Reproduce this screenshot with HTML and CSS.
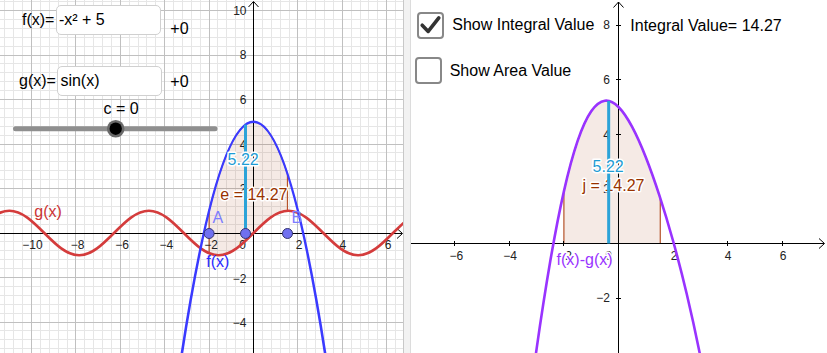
FILE: index.html
```html
<!DOCTYPE html>
<html>
<head>
<meta charset="utf-8">
<title>Integral between f and g</title>
<link rel="stylesheet" href="styles.css">
</head>
<body>
<div class="applet">
  <div class="view view-left">
    <svg class="canvas" width="403" height="353" viewBox="0 0 403 353">
      <g transform="translate(253.5 233) scale(22.2 -22.25)">
        <path class="grid-minor" d="M-11.2 -6V11M-10.8 -6V11M-10.4 -6V11M-9.6 -6V11M-9.2 -6V11M-8.8 -6V11M-8.4 -6V11M-7.6 -6V11M-7.2 -6V11M-6.8 -6V11M-6.4 -6V11M-5.6 -6V11M-5.2 -6V11M-4.8 -6V11M-4.4 -6V11M-3.6 -6V11M-3.2 -6V11M-2.8 -6V11M-2.4 -6V11M-1.6 -6V11M-1.2 -6V11M-0.8 -6V11M-0.4 -6V11M0.4 -6V11M0.8 -6V11M1.2 -6V11M1.6 -6V11M2.4 -6V11M2.8 -6V11M3.2 -6V11M3.6 -6V11M4.4 -6V11M4.8 -6V11M5.2 -6V11M5.6 -6V11M6.4 -6V11M-12 -5.2H7M-12 -4.8H7M-12 -4.4H7M-12 -3.6H7M-12 -3.2H7M-12 -2.8H7M-12 -2.4H7M-12 -1.6H7M-12 -1.2H7M-12 -0.8H7M-12 -0.4H7M-12 0.4H7M-12 0.8H7M-12 1.2H7M-12 1.6H7M-12 2.4H7M-12 2.8H7M-12 3.2H7M-12 3.6H7M-12 4.4H7M-12 4.8H7M-12 5.2H7M-12 5.6H7M-12 6.4H7M-12 6.8H7M-12 7.2H7M-12 7.6H7M-12 8.4H7M-12 8.8H7M-12 9.2H7M-12 9.6H7M-12 10.4H7"/>
        <path class="grid-major" d="M-10 -6V11M-8 -6V11M-6 -6V11M-4 -6V11M-2 -6V11M2 -6V11M4 -6V11M6 -6V11M-12 -4H7M-12 -2H7M-12 2H7M-12 4H7M-12 6H7M-12 8H7M-12 10H7"/>
        <path class="region" d="M-2 1Q-0.235 8.06 1.53 2.6591L1.53 0.9992L1.25 0.949L1 0.8415L0.75 0.6816L0.5 0.4794L0.25 0.2474L0 0L-0.25 -0.2474L-0.5 -0.4794L-0.75 -0.6816L-1 -0.8415L-1.25 -0.949L-1.5 -0.9975L-1.75 -0.984L-2 -0.9093Z"/>
      </g>
      <path class="axis" d="M0 233.5H402M253.5 353V1.5"/>
      <path class="arrow" d="M397 228.5L402.5 233.5L397 238.5M248.5 7L253.5 1.5L258.5 7"/>
      <g class="tick tick-mid">
        <text x="32.5" y="249">−10</text>
        <text x="77.5" y="249">−8</text>
        <text x="122" y="249">−6</text>
        <text x="166.3" y="249">−4</text>
        <text x="211" y="249">−2</text>
        <text x="242.5" y="249">0</text>
        <text x="299" y="249">2</text>
        <text x="342.8" y="249">4</text>
        <text x="388" y="249">6</text>
      </g>
      <g class="tick tick-end">
        <text x="246.5" y="15">10</text>
        <text x="246.5" y="59">8</text>
        <text x="246.5" y="104">6</text>
        <text x="246.5" y="148.5">4</text>
        <text x="246.5" y="193">2</text>
        <text x="246.5" y="283">−2</text>
        <text x="246.5" y="327">−4</text>
      </g>
      <g transform="translate(253.5 233) scale(22.2 -22.25)">
        <path class="curve curve-g" d="M-12.5664 0c0.5123 0.5123 1.0023 1 1.5708 1c0.5685 0 1.0585 -0.4877 1.5708 -1c0.5123 -0.5123 1.0023 -1 1.5708 -1c0.5685 0 1.0585 0.4877 1.5708 1c0.5123 0.5123 1.0023 1 1.5708 1c0.5685 0 1.0585 -0.4877 1.5708 -1c0.5123 -0.5123 1.0023 -1 1.5708 -1c0.5685 0 1.0585 0.4877 1.5708 1c0.5123 0.5123 1.0023 1 1.5708 1c0.5685 0 1.0585 -0.4877 1.5708 -1c0.5123 -0.5123 1.0023 -1 1.5708 -1c0.5685 0 1.0585 0.4877 1.5708 1c0.5123 0.5123 1.0023 1 1.5708 1"/>
        <path class="curve curve-f" d="M-3.6 -7.96Q0 17.96 3.6 -7.96"/>
      </g>
      <text class="lbl lbl-g" x="34.3" y="216.5">g(x)</text>
      <text class="lbl lbl-f" x="206.3" y="266.5">f(x)</text>
      <text class="lbl lbl-pt" x="212.6" y="223.3">A</text>
      <text class="lbl lbl-pt" x="291.6" y="223.3">B</text>
      <text class="lbl lbl-area halo" x="220.3" y="200">e = 14.27</text>
      <g transform="translate(253.5 233) scale(22.2 -22.25)">
        <path class="segment" d="M-0.36 0V4.8704"/>
      </g>
      <text class="lbl lbl-len halo" x="227.6" y="165">5.22</text>
      <circle class="point" cx="209.1" cy="233.5" r="5"/>
      <circle class="point" cx="245.5" cy="233.5" r="5"/>
      <circle class="point" cx="287.5" cy="233.5" r="5"/>
      <text class="lbl" x="170.3" y="34.3">+0</text>
      <text class="lbl" x="170.3" y="86.7">+0</text>
      <text class="lbl" x="103.6" y="114.3">c = 0</text>
      <line class="slider-track" x1="15.5" y1="128.7" x2="215" y2="128.7"/>
      <circle class="slider-ring" cx="115.7" cy="128.7" r="8.8"/>
      <circle class="slider-knob" cx="115.7" cy="128.7" r="6.2"/>
    </svg>
    <div class="field field-f">
      <span class="field-label">f(x)=</span>
      <div class="field-box">-x² + 5</div>
    </div>
    <div class="field field-g">
      <span class="field-label">g(x)=</span>
      <div class="field-box">sin(x)</div>
    </div>
  </div>
  <div class="divider"></div>
  <div class="view view-right">
    <svg class="canvas" width="416" height="353" viewBox="0 0 416 353">
      <g transform="translate(207.5 243.5) scale(27.3 -27.3)">
        <path class="region" d="M-2 0L-2 1.9093C-1.8333 2.6453 -1.6667 3.2593 -1.5 3.7475C-1.3333 4.2357 -1.1667 4.5982 -1 4.8415C-0.8333 5.0848 -0.6667 5.209 -0.5 5.2294C-0.3333 5.2498 -0.1667 5.1667 0 5C0.1667 4.8333 0.3333 4.5835 0.5 4.2706C0.6667 3.9577 0.8333 3.5819 1 3.1585C1.1667 2.7351 1.3333 2.2643 1.5 1.7525L1.53 1.66L1.53 0Z"/>
      </g>
      <path class="axis" d="M0 243.5H413M207.5 353V2M43.7 241V246M98.3 241V246M152.9 241V246M262.1 241V246M316.7 241V246M371.3 241V246M205 25.1H210M205 79.7H210M205 134.3H210M205 188.9H210M205 298.1H210"/>
      <path class="arrow" d="M408 238.5L413.5 243.5L408 248.5M202.5 7.5L207.5 2L212.5 7.5"/>
      <g class="tick tick-mid">
        <text x="45.3" y="259.5">−6</text>
        <text x="99" y="259.5">−4</text>
        <text x="154" y="259.5">−2</text>
        <text x="197.5" y="259.5">0</text>
        <text x="263" y="259.5">2</text>
        <text x="317" y="259.5">4</text>
        <text x="372" y="259.5">6</text>
      </g>
      <g class="tick tick-end">
        <text x="199" y="29.4">8</text>
        <text x="199" y="84">6</text>
        <text x="199" y="138.6">4</text>
        <text x="199" y="193.2">2</text>
        <text x="199" y="302.4">−2</text>
      </g>
      <g transform="translate(207.5 243.5) scale(27.3 -27.3)">
        <path class="curve curve-h" d="M-3.25 -5.6707C-3.1667 -5.0462 -3.0833 -4.4414 -3 -3.8589C-2.8333 -2.6939 -2.6667 -1.6184 -2.5 -0.6515C-2.3333 0.3154 -2.1667 1.1733 -2 1.9093C-1.8333 2.6453 -1.6667 3.2593 -1.5 3.7475C-1.3333 4.2357 -1.1667 4.5982 -1 4.8415C-0.8333 5.0848 -0.6667 5.209 -0.5 5.2294C-0.3333 5.2498 -0.1667 5.1667 0 5C0.1667 4.8333 0.3333 4.5835 0.5 4.2706C0.6667 3.9577 0.8333 3.5819 1 3.1585C1.1667 2.7351 1.3333 2.2643 1.5 1.7525C1.6667 1.2407 1.8333 0.688 2 0.0907C2.1667 -0.5066 2.3333 -1.1487 2.5 -1.8485C2.6667 -2.5483 2.8333 -3.3061 3 -4.1411C3.0833 -4.5586 3.1667 -4.9955 3.25 -5.4543"/>
      </g>
      <text class="lbl lbl-h halo" x="145.6" y="265">f(x)-g(x)</text>
      <text class="lbl lbl-area halo" x="171.6" y="191">j = 14.27</text>
      <g transform="translate(207.5 243.5) scale(27.3 -27.3)">
        <path class="segment" d="M-0.36 0V5.2227"/>
      </g>
      <text class="lbl lbl-len halo" x="181.6" y="171.7">5.22</text>
      <text class="lbl" x="219.3" y="31">Integral Value= 14.27</text>
    </svg>
    <label class="check check-1">
      <span class="check-box">
        <svg class="check-mark" width="23" height="23" viewBox="0 0 23 23"><path d="M3.2 11.2L9.2 17.4L19.8 3.8"/></svg>
      </span>
      <span class="check-text">Show Integral Value</span>
    </label>
    <label class="check check-2">
      <span class="check-box"></span>
      <span class="check-text">Show Area Value</span>
    </label>
  </div>
</div>
</body>
</html>
```

FILE: styles.css
```css
html, body {
  margin: 0;
  padding: 0;
  background: #ffffff;
}

body {
  font-family: "Liberation Sans", Arial, sans-serif;
  color: #000;
}

.applet {
  display: flex;
  width: 827px;
  height: 353px;
  overflow: hidden;
}

.view {
  position: relative;
  height: 353px;
  overflow: hidden;
  background: #ffffff;
}

.view-left {
  width: 403px;
  flex: none;
}

.view-right {
  flex: 1;
}

.divider {
  width: 8px;
  flex: none;
  box-sizing: border-box;
  background: #f2f2f2;
  border-left: 1px solid #c8c8c8;
  border-right: 1px solid #dcdcdc;
}

.canvas {
  display: block;
  font-family: "Liberation Sans", Arial, sans-serif;
}

/* grid and axes */
.grid-minor {
  fill: none;
  stroke: #e6e6e6;
  stroke-width: 1;
  vector-effect: non-scaling-stroke;
  shape-rendering: crispEdges;
}

.grid-major {
  fill: none;
  stroke: #c0c0c0;
  stroke-width: 1;
  vector-effect: non-scaling-stroke;
  shape-rendering: crispEdges;
}

.axis {
  fill: none;
  stroke: #000;
  stroke-width: 1;
  shape-rendering: crispEdges;
}

.arrow {
  fill: none;
  stroke: #000;
  stroke-width: 1;
}

.tick {
  font-size: 12px;
  fill: #222;
}

.tick-mid {
  text-anchor: middle;
}

.tick-end {
  text-anchor: end;
}

/* objects */
.region {
  fill: #993300;
  fill-opacity: 0.1;
  stroke: #b5532a;
  stroke-width: 1.2;
  vector-effect: non-scaling-stroke;
}

.curve {
  fill: none;
  stroke-width: 2.6;
  stroke-linecap: round;
  vector-effect: non-scaling-stroke;
}

.curve-f { stroke: #3a3aff; }
.curve-g { stroke: #d43c3c; }
.curve-h { stroke: #9933ff; }

.segment {
  fill: none;
  stroke: #2ba3d8;
  stroke-width: 3;
  vector-effect: non-scaling-stroke;
}

.point {
  fill: #7070f0;
  stroke: #33336e;
  stroke-width: 1;
}

.lbl {
  font-size: 16px;
  fill: #000;
}

.lbl-f { fill: #2b2bff; }
.lbl-g { fill: #cc3333; }
.lbl-h { fill: #9933ff; }
.lbl-pt { fill: #7d7dff; }
.lbl-area { fill: #993300; }
.lbl-len { fill: #1f9cd4; }

.halo {
  paint-order: stroke;
  stroke: #ffffff;
  stroke-width: 3px;
  stroke-linejoin: round;
}

.slider-track {
  stroke: #8f8f8f;
  stroke-width: 5;
  stroke-linecap: round;
}

.slider-ring {
  fill: #6a6a6a;
}

.slider-knob {
  fill: #000;
}

/* input boxes on the canvas */
.field {
  position: absolute;
  display: flex;
  align-items: center;
  gap: 1.5px;
  font-size: 16px;
  line-height: 18px;
}

.field-f {
  left: 22px;
  top: 4.5px;
}

.field-g {
  left: 19px;
  top: 65.7px;
}

.field-box {
  box-sizing: border-box;
  width: 105px;
  height: 30.5px;
  padding-left: 2px;
  display: flex;
  align-items: center;
  background: #ffffff;
  border: 1px solid #d0d0d0;
  border-radius: 5px;
}

/* check boxes */
.check {
  position: absolute;
  display: flex;
  align-items: center;
  gap: 8px;
  font-size: 16px;
  line-height: 18px;
}

.check-1 {
  left: 6.3px;
  top: 11.7px;
}

.check-2 {
  left: 3.7px;
  top: 57.3px;
}

.check-box {
  box-sizing: border-box;
  width: 27px;
  height: 27px;
  border: 2px solid #888888;
  border-radius: 4px;
  background: #ffffff;
  display: block;
}

.check-mark {
  display: block;
}

.check-mark path {
  fill: none;
  stroke: #333333;
  stroke-width: 3.6;
  stroke-linecap: round;
  stroke-linejoin: round;
}
```
